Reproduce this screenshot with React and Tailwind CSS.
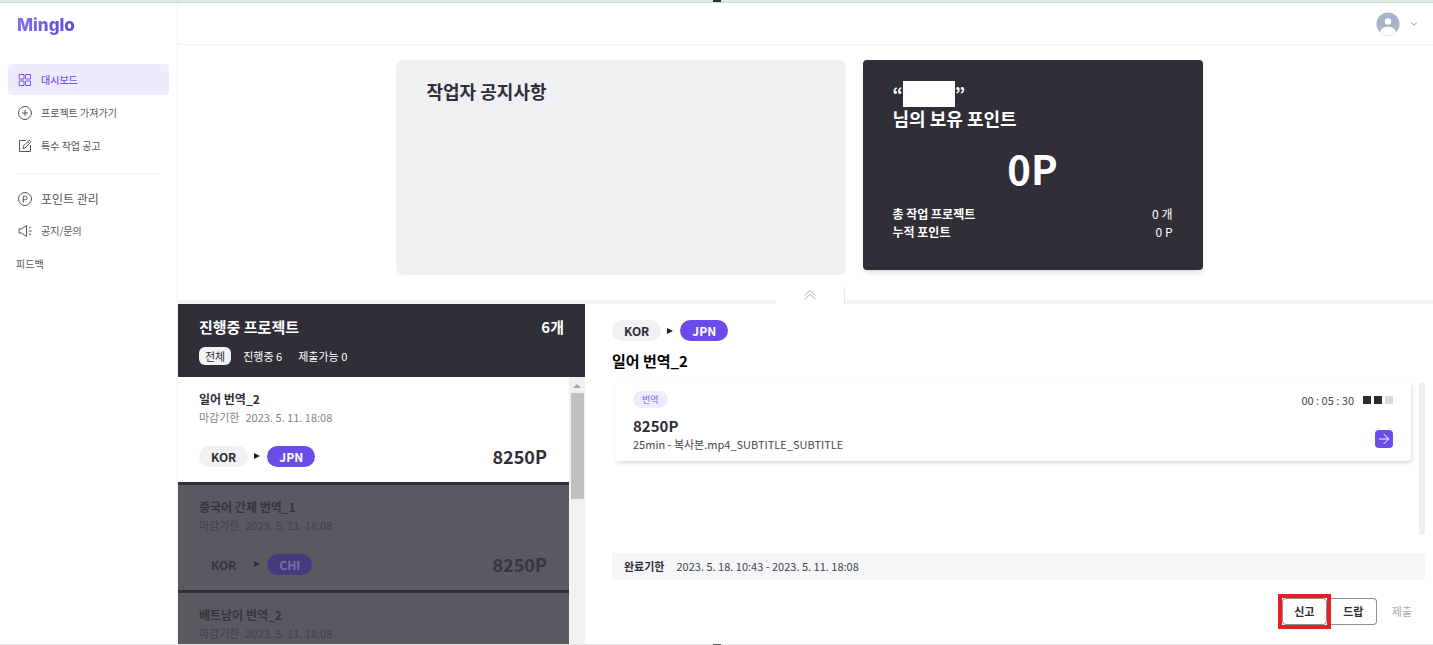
import React from "react";
import { ChevronDown, ArrowRight } from "lucide-react";

/* ── Sidebar icons ── */
function Icon({ children }) {
  return (
    <svg
      viewBox="0 0 16 16"
      className="w-4 h-4 shrink-0"
      fill="none"
      stroke="currentColor"
      strokeWidth="1"
      strokeLinecap="round"
      strokeLinejoin="round"
      aria-hidden="true"
    >
      {children}
    </svg>
  );
}

const GridIcon = () => (
  <Icon>
    <rect x="2.5" y="2.5" width="4.5" height="4.5" />
    <rect x="9" y="2.5" width="4.5" height="4.5" />
    <rect x="2.5" y="9" width="4.5" height="4.5" />
    <rect x="9" y="9" width="4.5" height="4.5" />
  </Icon>
);

const PlusIcon = () => (
  <Icon>
    <circle cx="8" cy="8" r="6.5" />
    <path d="M8 5.5v5M5.5 8h5" />
  </Icon>
);

const EditIcon = () => (
  <Icon>
    <path d="M8.5 2.5h-6v11h11v-6" />
    <path d="M6 10.2l.4-2.2 5.3-5.3a1 1 0 0 1 1.4 0l.4.4a1 1 0 0 1 0 1.4L8.2 9.8z" />
    <path d="M10.7 3.8l1.8 1.8" />
  </Icon>
);

const PointIcon = () => (
  <Icon>
    <circle cx="8" cy="8" r="6.5" />
    <path d="M6.3 11V5.3h2.2a1.7 1.7 0 0 1 0 3.4H6.3" />
  </Icon>
);

const SpeakerIcon = () => (
  <Icon>
    <path d="M2 6v4h2.5L9.5 13.5v-11L4.5 6z" />
    <path d="M12.3 8h2M12.3 5l1.4-.9M12.3 11l1.4.9" />
  </Icon>
);

/* ── Sidebar ── */
function NavItem({ icon, label, active, large }) {
  return (
    <a
      href="#"
      className={`flex items-center gap-2 rounded-sm pl-[9px] h-[31px] ${
        large ? "text-[12px]" : "text-[10px]"
      } ${active ? "bg-[#efebfd] text-[#7257e6] font-medium" : "text-[#55555d]"}`}
    >
      {icon}
      {label}
    </a>
  );
}

function Sidebar() {
  return (
    <aside className="w-[178px] shrink-0 border-r border-[#f3f3f5] px-2">
      <a
        href="#"
        className="block w-fit pl-[9px] pt-[10px] font-['Inter',sans-serif] font-extrabold text-[17px] leading-[24px] text-transparent bg-clip-text bg-linear-to-r from-[#8b74ea] to-[#6244dc]"
      >
        Minglo
      </a>
      <nav className="mt-[27px]">
        <div className="flex flex-col gap-[2px]">
          <NavItem icon={<GridIcon />} label="대시보드" active />
          <NavItem icon={<PlusIcon />} label="프로젝트 가져가기" />
          <NavItem icon={<EditIcon />} label="특수 작업 공고" />
        </div>
        <hr className="mx-2 mt-3 mb-[9px] border-[#f3f3f5]" />
        <div className="flex flex-col gap-px">
          <NavItem icon={<PointIcon />} label="포인트 관리" large />
          <NavItem icon={<SpeakerIcon />} label="공지/문의" />
        </div>
        <a
          href="#"
          className="flex items-center pl-2 h-[35px] text-[10px] text-[#55555d]"
        >
          피드백
        </a>
      </nav>
    </aside>
  );
}

/* ── Top bar ── */
function TopBar() {
  return (
    <header className="h-[42px] shrink-0 border-b border-[#f1f1f3] flex items-center justify-end pr-[14px]">
      <button type="button" aria-label="계정 메뉴" className="flex items-center gap-[9px]">
        <svg viewBox="0 0 24 24" className="w-6 h-6" aria-hidden="true">
          <circle cx="12" cy="12" r="11.5" fill="#aab4c8" />
          <circle cx="12" cy="9.5" r="3.2" fill="#fff" />
          <path d="M4 20.2C5 16.5 8 14.8 12 14.8s7 1.7 8 5.4a11.5 11.5 0 0 1-16 0z" fill="#fff" />
        </svg>
        <ChevronDown className="w-[10px] h-[10px] text-[#777]" strokeWidth={2} />
      </button>
    </header>
  );
}

/* ── Notice and point cards ── */
function Summary() {
  return (
    <section className="flex items-start justify-center gap-[18px] pt-[15px] pr-3 h-[242px] shrink-0">
      <div className="w-[448px] h-[213px] rounded-md bg-[#eff0f2] shadow-sm pt-[18px] px-[30px]">
        <h2 className="text-[18px] leading-[26px] font-bold text-[#302e37]">작업자 공지사항</h2>
      </div>
      <div className="w-[340px] h-[210px] rounded-sm bg-[#302e37] text-white shadow-md pt-[21px] px-[30px]">
        <h2 className="text-[18px] leading-[25px] font-bold">
          <span className="flex h-[25px]">
            “<span className="w-[52px] h-[26px] bg-white" />”
          </span>
          님의 보유 포인트
        </h2>
        <p className="mt-2 text-center text-[40px] leading-[58px] font-bold">0P</p>
        <dl className="mt-2 text-[12px] leading-[18px]">
          <div className="flex justify-between">
            <dt className="font-bold">총 작업 프로젝트</dt>
            <dd>0 개</dd>
          </div>
          <div className="flex justify-between">
            <dt className="font-bold">누적 포인트</dt>
            <dd>0 P</dd>
          </div>
        </dl>
      </div>
    </section>
  );
}

/* ── Language pair ── */
function LanguagePair({ to, dimmed }) {
  return (
    <div className="flex items-center text-[12px] leading-[21px] font-bold">
      <span
        className={`rounded-full px-3 ${
          dimmed ? "bg-[#59575f] text-[#37353e]" : "bg-[#eff1f3] text-[#302e37]"
        }`}
      >
        KOR
      </span>
      <svg
        viewBox="0 0 6 6"
        className={`w-[6px] h-[6px] ml-[6px] mr-[7px] ${dimmed ? "text-[#302e37]" : "text-[#222]"}`}
        aria-hidden="true"
      >
        <path d="M0 0l6 3-6 3z" fill="currentColor" />
      </svg>
      <span
        className={`rounded-full px-3 ${
          dimmed ? "bg-[#463a7c] text-[#7a70a8]" : "bg-[#6b4bea] text-white"
        }`}
      >
        {to}
      </span>
    </div>
  );
}

/* ── Project list ── */
const projects = [
  { title: "일어 번역_2", to: "JPN", point: "8250P", selected: true },
  { title: "중국어 간체 번역_1", to: "CHI", point: "8250P" },
  { title: "베트남어 번역_2" },
];

function ProjectItem({ title, to, point, selected }) {
  return (
    <li
      className={`h-[108px] shrink-0 border-b-3 border-[#302e37] pt-3 pl-[21px] pr-[22px] ${
        selected ? "bg-white text-[#302e37]" : "bg-[#5a5860] text-[#37353e]"
      }`}
    >
      <h3 className="text-[12px] leading-[19px] font-bold">{title}</h3>
      <p
        className={`flex gap-[6px] text-[11px] leading-[19px] ${
          selected ? "text-[#85848a]" : "text-[#44424a]"
        }`}
      >
        <span>마감기한</span>
        <span>2023. 5. 11. 18:08</span>
      </p>
      {to && (
        <div className="flex items-center justify-between mt-[15px]">
          <LanguagePair to={to} dimmed={!selected} />
          <strong className="text-[18px] leading-[28px] font-bold">{point}</strong>
        </div>
      )}
    </li>
  );
}

function ProjectList() {
  return (
    <section className="w-[407px] shrink-0 flex flex-col min-h-0">
      <div className="h-[73px] shrink-0 bg-[#302e37] text-white pt-[11px] px-[21px]">
        <div className="flex justify-between text-[15px] leading-[24px] font-bold">
          <h2>진행중 프로젝트</h2>
          <span>6개</span>
        </div>
        <div className="flex items-center mt-2 text-[11px] leading-[18px]">
          <button type="button" className="rounded-md bg-[#f3f3f5] px-[6px] text-[#302e37]">
            전체
          </button>
          <button type="button" className="ml-3">진행중 6</button>
          <button type="button" className="ml-4">제출가능 0</button>
        </div>
      </div>
      <div className="flex flex-1 min-h-0">
        <ul className="flex-1 flex flex-col overflow-hidden">
          {projects.map((project) => (
            <ProjectItem key={project.title} {...project} />
          ))}
        </ul>
        <div className="w-4 bg-[#f1f1f2] flex flex-col items-center">
          <svg viewBox="0 0 16 16" className="w-4 h-4" aria-hidden="true">
            <path d="M4 11l4-4 4 4z" fill="#a3a3a3" />
          </svg>
          <div className="w-[13px] h-[106px] bg-[#c1c1c1]" />
        </div>
      </div>
    </section>
  );
}

/* ── Project detail ── */
function TaskCard() {
  return (
    <article className="flex-1 h-[79px] rounded-sm shadow-[1px_2px_4px_rgba(0,0,0,0.14)] flex justify-between pt-[9px] px-[18px]">
      <div>
        <span className="block w-fit rounded-full bg-[#efebfd] px-[9px] text-[9px] leading-[17px] text-[#7a5fe8]">
          번역
        </span>
        <p className="mt-[7px] text-[15px] leading-[21px] font-bold text-[#302e37]">8250P</p>
        <p className="text-[11px] leading-[16px] text-[#45454d]">
          25min - 복사본.mp4_SUBTITLE_SUBTITLE
        </p>
      </div>
      <div className="flex flex-col items-end">
        <div className="flex items-center gap-[9px] text-[11px] leading-[18px] text-[#45454d]">
          <span>00 : 05 : 30</span>
          <span className="flex gap-[3px]">
            <i className="w-2 h-2 bg-[#2c2c2e]" />
            <i className="w-2 h-2 bg-[#2c2c2e]" />
            <i className="w-2 h-2 bg-[#d9d9d9]" />
          </span>
        </div>
        <button
          type="button"
          aria-label="작업 열기"
          className="mt-[21px] w-[18px] h-[18px] rounded-sm bg-[#6b4bea] text-white flex items-center justify-center"
        >
          <ArrowRight className="w-4 h-4" strokeWidth={1.5} />
        </button>
      </div>
    </article>
  );
}

function ProjectDetail() {
  return (
    <section className="flex-1 flex flex-col pt-4 pl-[27px] pr-2">
      <LanguagePair to="JPN" />
      <h2 className="mt-[9px] text-[15px] leading-[22px] font-bold text-black">일어 번역_2</h2>
      <div className="flex gap-2 mt-[10px] pl-[3px] h-[153px]">
        <TaskCard />
        <div className="w-[6px] rounded-full bg-[#efefef]" />
      </div>
      <div className="flex gap-3 mt-[18px] h-[27px] items-center bg-[#f4f6f8] px-3 text-[11px]">
        <strong className="font-bold text-[#302e37]">완료기한</strong>
        <span className="text-[#45454d]">2023. 5. 18. 10:43 - 2023. 5. 11. 18:08</span>
      </div>
      <div className="flex justify-end items-center mt-[14px] pr-[13px] text-[11px] font-bold text-[#302e37]">
        <span className="border-4 border-[#e61e25] flex">
          <button
            type="button"
            className="w-[45px] h-[27px] rounded-sm border border-[#8f8f94]"
          >
            신고
          </button>
        </span>
        <button
          type="button"
          className="w-[46px] h-[27px] rounded-r-sm border border-l-0 border-[#8f8f94]"
        >
          드랍
        </button>
        <button type="button" disabled className="ml-[15px] font-normal text-[#a9a9ad]">
          제출
        </button>
      </div>
    </section>
  );
}

export default function App() {
  return (
    <div className="h-screen flex flex-col overflow-hidden bg-white font-['Noto_Sans_CJK_KR',sans-serif]">
      <div className="h-[3px] shrink-0 bg-[#e4e6e6] border-b border-[#c4e2dc] flex justify-center">
        <span className="w-2 h-[2px] bg-[#333]" />
      </div>
      <div className="flex flex-1 min-h-0">
        <Sidebar />
        <main className="flex-1 flex flex-col min-w-0">
          <TopBar />
          <Summary />
          <div className="h-[17px] shrink-0 flex">
            <div className="w-[598px] self-end h-1 bg-[#f4f4f4]" />
            <button
              type="button"
              aria-label="접기"
              className="w-[69px] flex items-start pt-[2px] justify-center rounded-tr-sm border-r border-[#e6e6e6] text-[#b4b4b6]"
            >
              <svg
                viewBox="0 0 14 12"
                className="w-[14px] h-3"
                fill="none"
                stroke="currentColor"
                aria-hidden="true"
              >
                <path d="M1.5 6.5l5.5-5 5.5 5M1.5 10.500l5.500-5 5.500 5" />
              </svg>
            </button>
            <div className="flex-1 self-end h-1 bg-[#f4f4f4]" />
          </div>
          <div className="flex flex-1 min-h-0">
            <ProjectList />
            <ProjectDetail />
          </div>
        </main>
      </div>
      <div className="h-px shrink-0 bg-[#e3e3e4] flex justify-center">
        <span className="w-2 h-px bg-[#555]" />
      </div>
    </div>
  );
}
